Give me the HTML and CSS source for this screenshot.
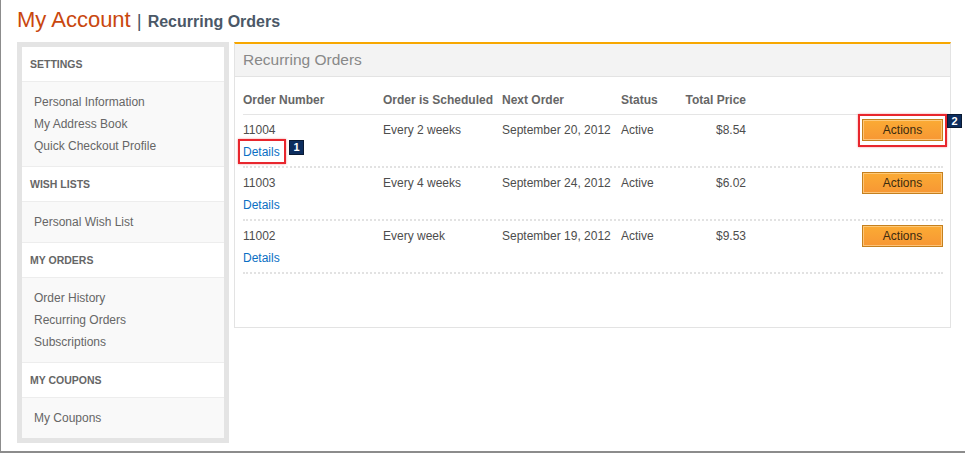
FILE: index.html
```html
<!DOCTYPE html>
<html lang="en">
<head>
  <meta charset="UTF-8">
  <title>My Account | Recurring Orders</title>
  <meta name="viewport" content="width=device-width, initial-scale=1.0">
  <link rel="stylesheet" href="styles.css">
</head>
<body>
  <div class="page">
    <h1 class="title">
      <span class="title-main">My Account</span>
      <span class="title-sep">|</span>
      <span class="title-sub">Recurring Orders</span>
    </h1>

    <div class="layout">
      <div class="sidebar">
        <div class="side-head">Settings</div>
        <ul class="side-links">
          <li><a href="#">Personal Information</a></li>
          <li><a href="#">My Address Book</a></li>
          <li><a href="#">Quick Checkout Profile</a></li>
        </ul>
        <div class="side-head">Wish Lists</div>
        <ul class="side-links">
          <li><a href="#">Personal Wish List</a></li>
        </ul>
        <div class="side-head">My Orders</div>
        <ul class="side-links">
          <li><a href="#">Order History</a></li>
          <li><a href="#">Recurring Orders</a></li>
          <li><a href="#">Subscriptions</a></li>
        </ul>
        <div class="side-head">My Coupons</div>
        <ul class="side-links">
          <li><a href="#">My Coupons</a></li>
        </ul>
      </div>

      <div class="panel">
        <div class="panel-head">Recurring Orders</div>
        <div class="orders">
          <div class="row thead">
            <div>Order Number</div>
            <div>Order is Scheduled</div>
            <div>Next Order</div>
            <div>Status</div>
            <div class="price">Total Price</div>
            <div></div>
          </div>

          <div class="row">
            <div>
              11004<br>
              <span class="callout">
                <a class="details" href="#">Details</a>
                <span class="mark-box details-box"></span>
                <span class="badge badge-1">1</span>
              </span>
            </div>
            <div>Every 2 weeks</div>
            <div>September 20, 2012</div>
            <div>Active</div>
            <div class="price">$8.54</div>
            <div class="act">
              <span class="callout">
                <button class="btn">Actions</button>
                <span class="mark-box btn-box"></span>
                <span class="badge badge-2">2</span>
              </span>
            </div>
          </div>

          <div class="row">
            <div>11003<br><a class="details" href="#">Details</a></div>
            <div>Every 4 weeks</div>
            <div>September 24, 2012</div>
            <div>Active</div>
            <div class="price">$6.02</div>
            <div class="act"><button class="btn">Actions</button></div>
          </div>

          <div class="row">
            <div>11002<br><a class="details" href="#">Details</a></div>
            <div>Every week</div>
            <div>September 19, 2012</div>
            <div>Active</div>
            <div class="price">$9.53</div>
            <div class="act"><button class="btn">Actions</button></div>
          </div>
        </div>
      </div>
    </div>
  </div>
</body>
</html>
```

FILE: styles.css
```css
* {
  box-sizing: border-box;
}

body {
  margin: 0;
  background: #fff;
  font-family: "Liberation Sans", Arial, sans-serif;
  font-size: 12px;
  color: #4d4d4d;
}

a {
  text-decoration: none;
}

.page {
  height: 453px;
  border-left: 1px solid #8c8c8c;
  border-bottom: 2px solid #8c8c8c;
  padding-left: 16px;
}

.title {
  display: flex;
  align-items: baseline;
  height: 33px;
  margin: 0;
  padding-top: 7px;
  line-height: 26px;
  font-weight: normal;
}

.title-main {
  font-size: 22px;
  color: #c9470e;
}

.title-sep {
  font-size: 19px;
  color: #4b5867;
  margin: 0 6px 0 6px;
}

.title-sub {
  font-size: 16px;
  font-weight: bold;
  color: #4b5867;
}

.layout {
  display: flex;
  align-items: flex-start;
  gap: 5px;
  margin-top: 9px;
}

/* sidebar */

.sidebar {
  width: 212px;
  border: 5px solid #e4e4e4;
  background: #fff;
}

.side-head {
  height: 35px;
  padding: 1px 8px 0;
  line-height: 32px;
  font-size: 10.5px;
  font-weight: bold;
  text-transform: uppercase;
  color: #666;
  border-top: 1px solid #ededed;
}

.side-head:first-child {
  border-top: none;
  height: 34px;
}

.side-links {
  list-style: none;
  margin: 0;
  padding: 9px 12px 9px;
  background: #f9f9f9;
  border-top: 1px solid #ededed;
  line-height: 22px;
}

.side-links a {
  color: #666;
}

/* main panel */

.panel {
  width: 717px;
  border: 1px solid #e3e3e3;
  border-top: 2px solid #f7a700;
  padding-bottom: 53px;
}

.panel-head {
  height: 33px;
  padding-left: 8px;
  line-height: 32px;
  font-size: 15.5px;
  color: #888;
  background: #f3f3f3;
  border-bottom: 1px solid #e3e3e3;
}

.orders {
  padding: 12px 7px 0 8px;
}

.row {
  display: grid;
  grid-template-columns: 140px 119px 119px 66px 59px 1fr;
  line-height: 22px;
  padding: 4px 0 3px;
  white-space: nowrap;
  border-bottom: 2px dotted #e2e2e2;
}

.row.thead {
  padding: 0 0 3px;
  font-weight: bold;
  color: #666;
  border-bottom: 1px solid #e5e5e5;
}

.price {
  display: flex;
  justify-content: flex-end;
}

.act {
  text-align: right;
}

.details {
  color: #0a6fc4;
}

.btn {
  width: 81px;
  height: 22px;
  padding: 0;
  vertical-align: top;
  font-family: "Liberation Sans", Arial, sans-serif;
  font-size: 12px;
  color: #3a2a10;
  background: linear-gradient(#fbab34, #f79734);
  border: 1px solid #c5801e;
  box-shadow: inset 0 0 0 1px rgba(255, 214, 150, 0.7);
}

/* review callouts */

.callout {
  position: relative;
  display: inline-block;
  vertical-align: top;
}

.mark-box {
  position: absolute;
  border: 2px solid #e8262d;
  box-shadow: 0 0 2px rgba(232, 38, 45, 0.5);
}

.details-box {
  top: -2px;
  bottom: -1px;
  left: -5px;
  right: -6px;
}

.btn-box {
  top: -5px;
  bottom: -6px;
  left: -4px;
  right: -4px;
}

.badge {
  position: absolute;
  width: 13px;
  height: 13px;
  line-height: 13px;
  text-align: center;
  font-size: 11px;
  font-weight: bold;
  color: #fff;
  background: #0c2d5e;
  outline: 1px solid #0a1a33;
}

.badge-1 {
  top: 0;
  left: 47px;
}

.badge-2 {
  top: -4px;
  left: 86px;
  height: 12px;
  line-height: 12px;
}
```
